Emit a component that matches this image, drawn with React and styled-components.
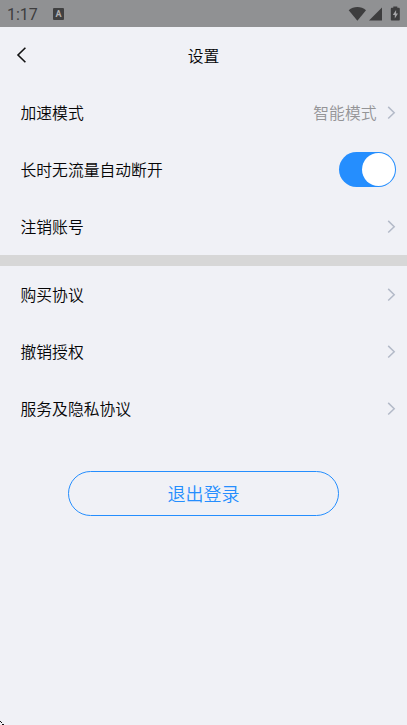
import { useState } from "react";
import styled, { createGlobalStyle } from "styled-components";

const GlobalStyle = createGlobalStyle`
  * {
    box-sizing: border-box;
  }

  body {
    margin: 0;
    background: #f0f1f6;
    color: #050506;
    font-family: Roboto, "Noto Sans CJK SC", sans-serif;
  }

  button {
    font-family: inherit;
    cursor: pointer;
  }
`;

const Screen = styled.div`
  position: relative;
  display: flex;
  flex-direction: column;
  height: 725px;
  overflow: hidden;
`;

const StatusBar = styled.div`
  display: flex;
  align-items: center;
  height: 27px;
  padding: 0 6px 0 7px;
  background: #909193;
  color: #3d3d3e;
`;

const Clock = styled.span`
  width: 46px;
  padding-top: 2px;
  font-size: 16px;
  line-height: 20px;
`;

const AppBadge = styled.span`
  display: flex;
  align-items: center;
  justify-content: center;
  width: 11px;
  height: 12px;
  border-radius: 1px;
  background: #404041;
  color: #b0b0b2;
  font-size: 9px;
  font-weight: 700;
  line-height: 12px;
`;

const StatusIcons = styled.svg`
  margin-left: auto;
`;

const Header = styled.header`
  display: grid;
  grid-template-columns: 44px 1fr 44px;
  align-items: center;
  height: 57px;
`;

const BackButton = styled.button`
  display: flex;
  padding: 0 0 1px 16px;
  border: 0;
  background: none;
  color: #111;
`;

const Title = styled.h1`
  margin: 0;
  padding-top: 2px;
  font-size: 15.8px;
  font-weight: 350;
  line-height: 24px;
  text-align: center;
`;

const Row = styled.div`
  display: flex;
  align-items: center;
  height: 57px;
  padding: 0 11px 0 20.5px;
  font-size: 15.8px;
  font-weight: 350;
  line-height: 24px;
`;

const Label = styled.span`
  flex: 1;
  padding-top: 2px;
`;

const Value = styled.span`
  margin-right: 10.5px;
  padding-top: 2px;
  color: #949496;
`;

const Divider = styled.div`
  height: 11px;
  background: #d7d7d7;
`;

const Switch = styled.button`
  display: flex;
  align-items: center;
  justify-content: ${({ $on }) => ($on ? "flex-end" : "flex-start")};
  width: 57px;
  height: 35px;
  padding: 1px;
  border: 0;
  border-radius: 18px;
  background: ${({ $on }) => ($on ? "#258efe" : "#d7d7d7")};
`;

const Knob = styled.span`
  width: 33px;
  height: 33px;
  border-radius: 50%;
  background: #fff;
`;

const LogoutButton = styled.button`
  align-self: center;
  width: 271px;
  height: 45px;
  margin-top: 34px;
  padding: 0 0 2px;
  border: 1px solid #258efe;
  border-radius: 23px;
  background: none;
  color: #258efe;
  font-size: 18px;
  font-weight: 350;
`;

const CornerMark = styled.svg`
  position: absolute;
  bottom: 0;
  left: 0;
`;

function Chevron() {
  return (
    <svg width="9" height="14" viewBox="0 0 9 14" fill="none">
      <path d="M1.2 .9 7.2 6.7 1.2 12.5" stroke="#b3bac8" strokeWidth="1.5" />
    </svg>
  );
}

function LinkRow({ label, value }) {
  return (
    <Row>
      <Label>{label}</Label>
      {value && <Value>{value}</Value>}
      <Chevron />
    </Row>
  );
}

export default function App() {
  const [autoDisconnect, setAutoDisconnect] = useState(true);

  return (
    <>
      <GlobalStyle />
      <Screen>
        <StatusBar>
          <Clock>1:17</Clock>
          <AppBadge>A</AppBadge>
          <StatusIcons width="53" height="16" viewBox="0 0 53 16" fill="#3d3d3e">
            <path d="M.7 4.2C5.6-.1 13.1-.1 18 4.2L9.4 14.8Z" />
            <path d="M34 1.5V14.5H21Z" />
            <path d="M45.3 1.8V.5h4v1.3h1.4c.7 0 1.1.4 1.1 1.1v10.6c0 .7-.4 1.1-1.1 1.1h-6.8c-.7 0-1.1-.4-1.1-1.1V2.9c0-.7.4-1.1 1.1-1.1Z" />
            <path d="M48.1 4 44.8 9h2v3.6L50 7.6h-1.9Z" fill="#a5a5a7" />
          </StatusIcons>
        </StatusBar>

        <Header>
          <BackButton aria-label="返回">
            <svg width="11" height="18" viewBox="0 0 11 18" fill="none">
              <path d="M9.4 1.7 2 9l7.4 7.3" stroke="currentColor" strokeWidth="1.6" />
            </svg>
          </BackButton>
          <Title>设置</Title>
        </Header>

        <LinkRow label="加速模式" value="智能模式" />
        <Row>
          <Label>长时无流量自动断开</Label>
          <Switch
            role="switch"
            aria-checked={autoDisconnect}
            $on={autoDisconnect}
            onClick={() => setAutoDisconnect(!autoDisconnect)}
          >
            <Knob />
          </Switch>
        </Row>
        <LinkRow label="注销账号" />

        <Divider />

        <LinkRow label="购买协议" />
        <LinkRow label="撤销授权" />
        <LinkRow label="服务及隐私协议" />

        <LogoutButton>退出登录</LogoutButton>

        <CornerMark width="4" height="4" viewBox="0 0 4 4" shapeRendering="crispEdges">
          <path d="M0 0h1v1H0ZM1 1h1v1H1ZM2 3h2v1H2Z" fill="#111" />
        </CornerMark>
      </Screen>
    </>
  );
}
